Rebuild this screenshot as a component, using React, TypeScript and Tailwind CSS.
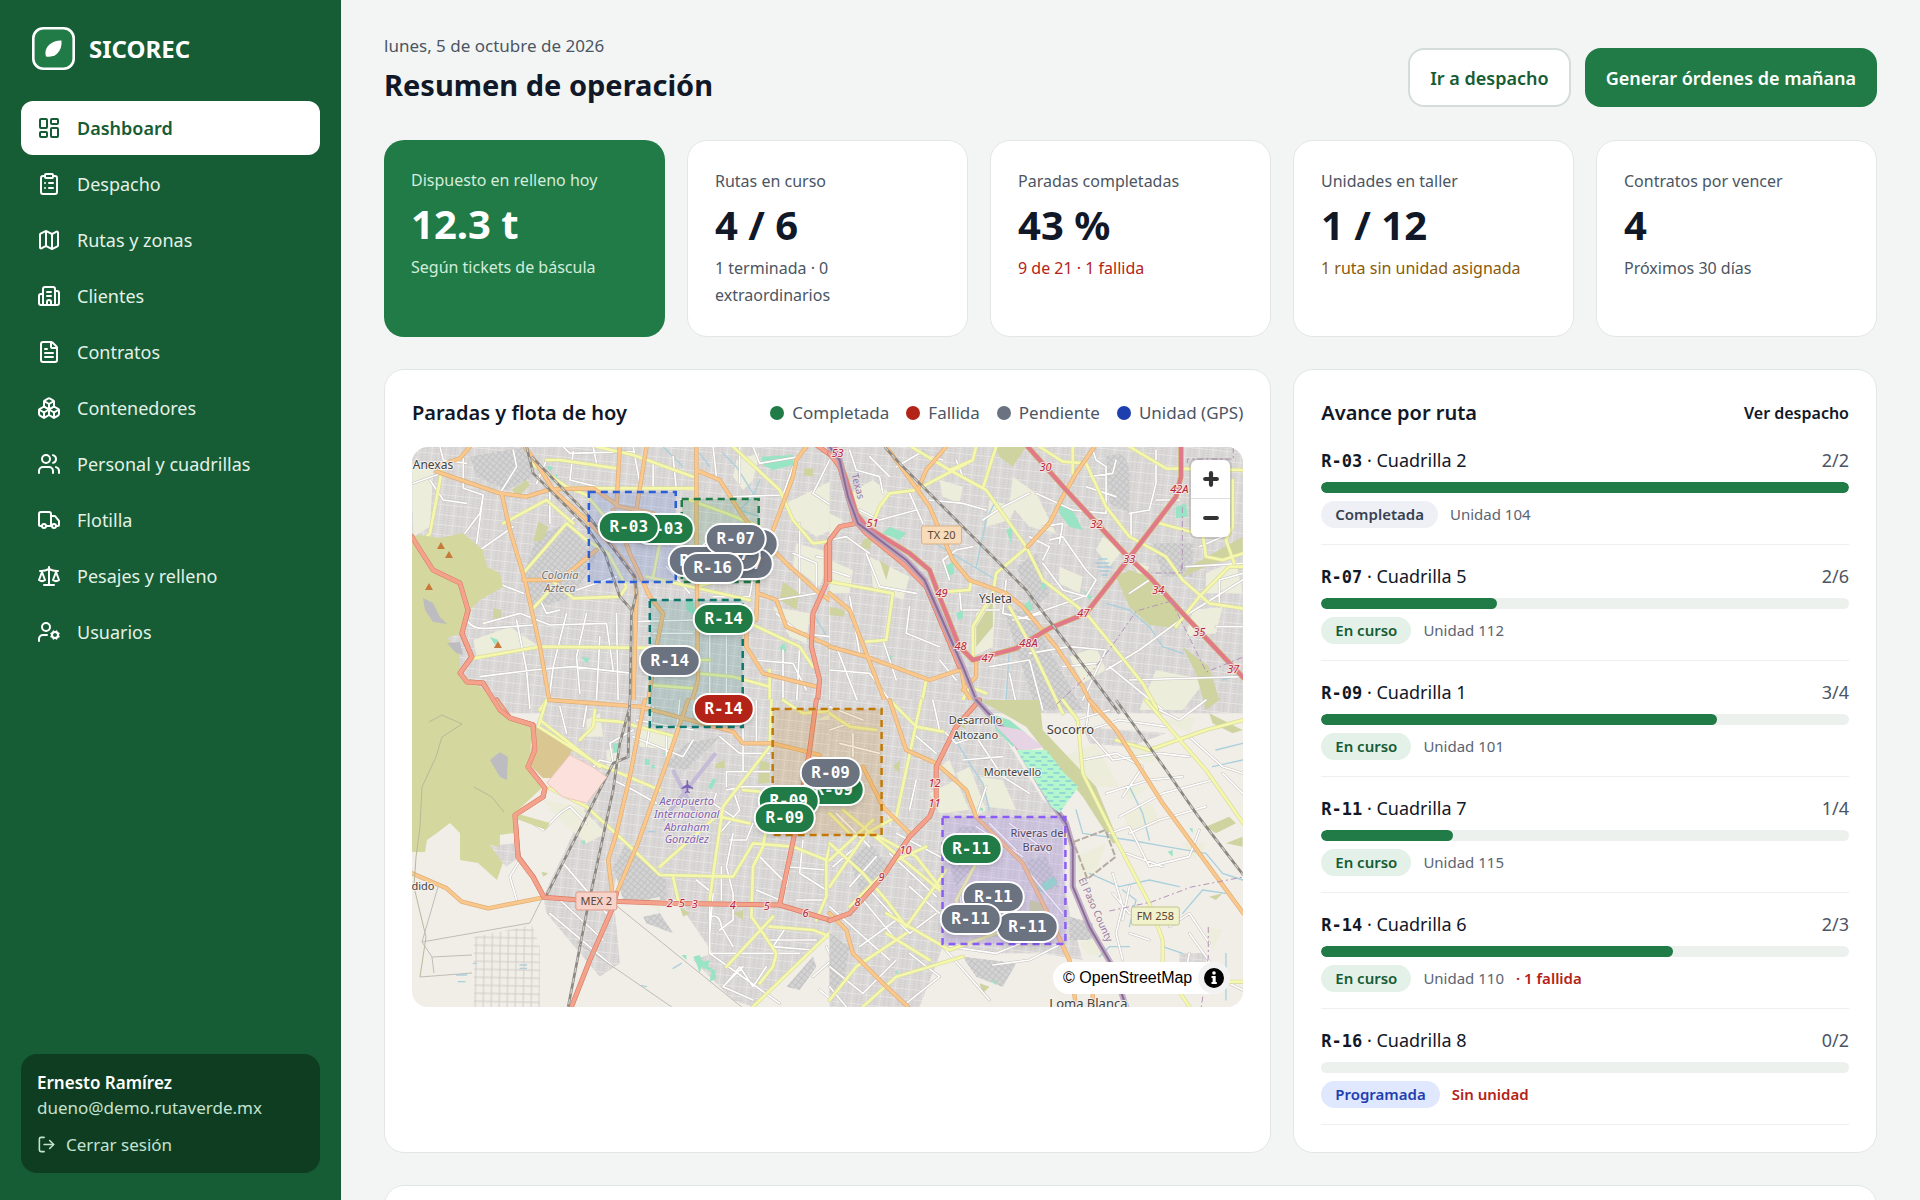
import React from 'react';
import {
  Boxes,
  ClipboardList,
  FileText,
  LayoutDashboard,
  LogOut,
  Map as MapIcon,
  Minus,
  Plus,
  Scale,
  Truck,
  UserCog,
  Users,
  type LucideIcon,
} from 'lucide-react';
import clsx from 'clsx';

interface NavItem {
  label: string;
  icon: LucideIcon | typeof ClientsIcon;
  active?: boolean;
}

interface Stat {
  label: string;
  value: string;
  note: string;
  tone?: 'danger' | 'warning';
  highlight?: boolean;
}

interface RouteProgress {
  code: string;
  crew: string;
  done: number;
  total: number;
  status: 'Completada' | 'En curso' | 'Programada';
  unit?: string;
  failed?: number;
}

interface Pin {
  code: string;
  x: number;
  y: number;
  status: 'done' | 'failed' | 'pending';
}

function ClientsIcon({ className }: { className?: string }) {
  return (
    <svg
      className={className}
      viewBox="0 0 24 24"
      fill="none"
      stroke="currentColor"
      strokeWidth="2"
      strokeLinecap="round"
      strokeLinejoin="round"
      aria-hidden="true"
    >
      <path d="M10 12h4M10 8h4M14 21v-3a2 2 0 0 0-4 0v3" />
      <path d="M6 10H4a2 2 0 0 0-2 2v7a2 2 0 0 0 2 2h16a2 2 0 0 0 2-2V9a2 2 0 0 0-2-2h-2" />
      <path d="M6 21V5a2 2 0 0 1 2-2h8a2 2 0 0 1 2 2v16" />
    </svg>
  );
}

const navItems: NavItem[] = [
  { label: 'Dashboard', icon: LayoutDashboard, active: true },
  { label: 'Despacho', icon: ClipboardList },
  { label: 'Rutas y zonas', icon: MapIcon },
  { label: 'Clientes', icon: ClientsIcon },
  { label: 'Contratos', icon: FileText },
  { label: 'Contenedores', icon: Boxes },
  { label: 'Personal y cuadrillas', icon: Users },
  { label: 'Flotilla', icon: Truck },
  { label: 'Pesajes y relleno', icon: Scale },
  { label: 'Usuarios', icon: UserCog },
];

const stats: Stat[] = [
  { label: 'Dispuesto en relleno hoy', value: '12.3 t', note: 'Según tickets de báscula', highlight: true },
  { label: 'Rutas en curso', value: '4 / 6', note: '1 terminada · 0 extraordinarios' },
  { label: 'Paradas completadas', value: '43 %', note: '9 de 21 · 1 fallida', tone: 'danger' },
  { label: 'Unidades en taller', value: '1 / 12', note: '1 ruta sin unidad asignada', tone: 'warning' },
  { label: 'Contratos por vencer', value: '4', note: 'Próximos 30 días' },
];

const routes: RouteProgress[] = [
  { code: 'R-03', crew: 'Cuadrilla 2', done: 2, total: 2, status: 'Completada', unit: 'Unidad 104' },
  { code: 'R-07', crew: 'Cuadrilla 5', done: 2, total: 6, status: 'En curso', unit: 'Unidad 112' },
  { code: 'R-09', crew: 'Cuadrilla 1', done: 3, total: 4, status: 'En curso', unit: 'Unidad 101' },
  { code: 'R-11', crew: 'Cuadrilla 7', done: 1, total: 4, status: 'En curso', unit: 'Unidad 115' },
  { code: 'R-14', crew: 'Cuadrilla 6', done: 2, total: 3, status: 'En curso', unit: 'Unidad 110', failed: 1 },
  { code: 'R-16', crew: 'Cuadrilla 8', done: 0, total: 2, status: 'Programada' },
];

const legend = [
  { label: 'Completada', dot: 'bg-[#207b46]' },
  { label: 'Fallida', dot: 'bg-[#b42318]' },
  { label: 'Pendiente', dot: 'bg-[#6b7280]' },
  { label: 'Unidad (GPS)', dot: 'bg-[#1e40af]' },
];

// Later pins are drawn over earlier ones
const pins: Pin[] = [
  { code: 'R-03', x: 252, y: 82, status: 'done' },
  { code: 'R-03', x: 217, y: 80, status: 'done' },
  { code: 'R-07', x: 336, y: 97, status: 'pending' },
  { code: 'R-07', x: 331, y: 117, status: 'pending' },
  { code: 'R-07', x: 318, y: 108, status: 'pending' },
  { code: 'R-07', x: 287, y: 114, status: 'pending' },
  { code: 'R-07', x: 324, y: 92, status: 'pending' },
  { code: 'R-16', x: 301, y: 121, status: 'pending' },
  { code: 'R-14', x: 312, y: 172, status: 'done' },
  { code: 'R-14', x: 258, y: 214, status: 'pending' },
  { code: 'R-14', x: 312, y: 262, status: 'failed' },
  { code: 'R-09', x: 422, y: 343, status: 'done' },
  { code: 'R-09', x: 419, y: 326, status: 'pending' },
  { code: 'R-09', x: 377, y: 354, status: 'done' },
  { code: 'R-09', x: 373, y: 371, status: 'done' },
  { code: 'R-11', x: 560, y: 402, status: 'done' },
  { code: 'R-11', x: 582, y: 450, status: 'pending' },
  { code: 'R-11', x: 616, y: 480, status: 'pending' },
  { code: 'R-11', x: 559, y: 472, status: 'pending' },
];

const zones = [
  { x: 177, y: 45, w: 87, h: 90, color: '#2b5fd9' },
  { x: 270, y: 52, w: 77, h: 83, color: '#207b46' },
  { x: 238, y: 153, w: 93, h: 127, color: '#0f766e' },
  { x: 361, y: 262, w: 109, h: 126, color: '#c27803' },
  { x: 531, y: 370, w: 123, h: 127, color: '#8b5cf6' },
];

const MAP_W = 832;
const MAP_H = 560;

interface Tile {
  x: number;
  y: number;
  built: string;
  built2?: string;
  park: string;
  farm: string;
  water: string;
  lane: string;
  minor: string;
  yellow: string;
  orange: string;
  red: string;
  pink?: string;
  border?: string;
  rail: string;
}

// Each tile is drawn at three times its size on the map
const tiles: Tile[] = [
  {
    x: -12,
    y: -67,
    built: 'M36 200H1320V1000H36Z',
    built2: 'M410 470L500 430L590 530L520 650L390 690L370 590ZM210 230L380 200L400 290L320 330L230 290Z',
    park: 'M335 330L380 300L390 315L355 350ZM400 485L415 425L445 440L430 480ZM1215 265H1240V290L1210 285ZM1150 605L1200 640L1190 690L1140 660ZM280 685L305 690V720L280 715Z',
    farm: 'M36 250L100 270L90 440L40 470ZM1010 240L1080 220L1060 300L1030 330L1000 290ZM1160 370L1320 290V440L1250 470L1190 430ZM1190 490L1300 520L1260 620L1180 560ZM1120 680L1230 700L1220 790L1170 770ZM220 780L330 740L420 800L230 830Z',
    water: 'M1085 230L1180 225V255L1120 270L1090 255ZM440 255L460 262L450 275ZM465 280L475 285L470 295Z M270 770L295 780L285 795ZM545 830L570 835L560 850ZM1140 800L1155 790L1160 815L1145 820ZM860 660L880 665L890 710L860 690Z',
    lane: 'M900 220L930 260M1080 300L1060 350L1020 390L1080 410M970 220L1010 260L1060 340M1240 700L1300 800L1290 900M790 200L850 260',
    minor: 'M40 310L125 280M190 235V325L250 345L240 400L195 460M120 200L130 240L200 250M90 300L130 360L200 370M250 345L230 490M300 340L350 260L340 210M520 215L510 300L590 320M580 200L590 250M490 200L510 220L700 215M440 240L410 310M700 200L720 310M760 250V330M820 230L830 330M940 200L950 290M1000 350L1150 345L1180 260M1020 200V310M1060 200L1080 250L1200 230M1290 240L1240 340L1300 380M500 430L540 400L600 440M240 510L340 440M250 730L360 700L450 735L620 730L640 870M500 700L460 860L450 940M560 700L530 830L540 940M350 720L380 870L390 985M190 690Q200 750 260 745L400 735M240 890L400 870L520 860L700 880M600 770L590 960M650 700L655 960M700 725L880 720M760 760H880M750 850H880M930 740V980M980 740V980M1180 520L1250 550V640L1130 660M1200 430V640M1250 530L1320 540M1130 700L1200 760L1290 770M1060 840L1180 850L1220 930M1150 810V980M1200 800L1190 985M1290 640V990M530 630L650 590M270 600L370 640M420 660L440 700L480 690M450 330V430M800 560L870 640M940 650H1050L1060 590',
    yellow:
      'M440 240L480 240L650 265M590 200L700 225L880 290M125 275L90 460L50 500M395 250L500 320L560 345L640 440M470 325H890M370 580L500 430L560 480L625 520L680 620L660 650L520 655L460 605M395 690L460 620M310 430L440 360L520 430M220 835L420 800L880 805M1000 200L1140 330L1180 420L1240 490L1320 480M740 590L1050 660M780 490L760 590M870 360L980 400L1080 440M750 915L880 925M890 880L1000 890L1110 920M1110 870V1000M1030 720L1200 800L1240 860M890 620L1075 570M750 840H930M420 990L440 960',
    orange:
      'M110 275L300 340L380 350L450 328L580 325L660 380L760 400M375 200L410 250L460 330L560 420L640 500L705 590L710 640L700 1000M305 340L330 450L375 600L420 800L448 960L720 985M660 200L650 380M740 200L705 420M640 390L690 520L750 650L790 700L770 800L740 1000M890 200V460L895 900L865 1000M890 270L960 300L1030 410L1080 470L1160 550L1260 640L1320 680M1220 200L1190 240L1180 290L1120 450M1075 560L1070 720M1075 640L1130 660L1160 740L1320 810M1040 700V800L1090 880L1250 920M370 600L480 600L590 510M210 200L180 235L110 260',
    red: 'M36 470L100 570L180 610L205 690L185 760L215 830L180 880L200 905L250 910L300 1000M1320 450L1280 500V610L1240 700L1235 800L1260 900L1250 1000M1250 195L1300 230L1325 260',
    rail: 'M380 200L400 280L470 350L560 440L615 520L660 650L700 695M395 230L560 400L705 590L710 640L695 700L690 1000',
  },
  {
    x: 418,
    y: -67,
    built: 'M0 200H1242V1000H0Z',
    built2: 'M830 230Q900 200 900 290V400L840 370ZM970 490H1090V590H1000ZM520 680L600 700L760 990L620 990ZM560 560L620 520L660 640L610 690Z',
    park: 'M860 590L900 570L960 590L1050 700L1040 745L960 735L900 680ZM1080 560L1240 470V520L1130 560L1060 590ZM1060 800L1140 860L1170 960L1130 990L1100 880ZM500 200H590L550 260L510 230ZM440 740L490 660V740L440 800ZM100 480L130 465L120 510L95 500ZM150 540L180 560L170 600ZM0 680L45 690V710L0 705Z',
    farm: 'M60 340L130 300L180 340L130 420L90 400ZM0 540L70 570L60 640L0 640ZM120 530L240 590L220 660L130 620ZM550 290L620 340L680 460L600 440L540 370ZM480 360L560 380L540 420L470 440ZM1130 580L1220 540L1240 640L1130 640ZM330 300L400 320L390 370L340 350ZM690 560L760 590L750 640L690 610ZM1090 690L1180 680L1160 760L1070 770ZM720 830L800 800L830 870L760 910ZM0 400L40 420L0 500ZM900 540L960 560L940 600ZM980 870L1130 900L1060 990H930ZM440 700L500 650L490 800L430 830ZM820 470L880 510L840 560L800 510Z',
    water: 'M180 440L230 460L210 480L160 460ZM685 360L730 390L760 450L720 440L690 400ZM345 560L370 545L375 580L350 590ZM380 700L400 690V715L385 720ZM580 680L600 660L610 690L585 700ZM760 630L790 650L780 660ZM1040 380L1070 370L1075 410L1040 415ZM635 610L650 605V625L640 630ZM530 450L550 440L545 490ZM170 820L190 830L180 850Z',
    lane: 'M500 360L470 420L440 560M830 670L900 690L960 740L1000 800L1060 820M540 800L530 960M1180 900L1240 880M300 480L500 600M280 210L300 240',
    minor: 'M60 210L80 270L150 290L160 340M120 230L180 290M200 260L270 220L340 240M90 390L150 420L260 390M0 480L50 470L120 520M110 520L150 620L260 640M0 570L60 590M340 540L380 510L430 500M340 540L360 600M300 360L400 370L470 390M380 240L400 290M240 340L280 430M460 420L520 380L600 340M620 340L730 390L830 400L830 260L800 240L790 210M780 290L850 280L860 240M770 320L860 350M660 480L700 470L770 570L800 600L770 650L700 630L640 550M600 470L660 500L640 540M900 400L960 390L980 310L980 210M905 400V470M980 360H1050M590 710L760 650M550 720L640 700M530 600L520 700L610 720M400 690H510M390 630L395 690M600 820L720 800L830 810L760 960M830 870L930 810L1080 700L1240 600M840 860L1000 990M900 900L1240 890M1160 740H1240M1170 680V600L1240 580M1070 560L1240 550M0 870L120 880L180 960M20 800L90 980M240 680L230 760L330 800M160 780L200 900M60 650L90 820M330 840L380 900M480 860L600 840L640 990M540 880L560 970M700 860L800 850M960 600L900 640M1110 500L1180 470M640 440L700 430L690 490',
    yellow:
      'M245 200L360 270L470 330L590 500L640 600L770 700L860 810L940 910L990 1000M500 200L460 325M440 200L430 240L260 330L180 340L150 380L130 430M360 270L430 240M630 200L700 245L770 250L830 380L900 470L1010 530L1060 600L1140 670L1240 685M900 200L1010 265L1240 270M1120 460L1130 530L1180 540L1242 520M1242 560H1200L1110 650L1040 740M595 500L500 580L490 640L430 740V830M730 200V280M0 605L190 640L170 780L110 785M350 635L420 630L425 600M540 680L600 790L700 1000M290 900L270 1000M990 430L1085 455M1210 300V440L1190 480L1215 550M470 940L420 920L380 1000',
    orange:
      'M170 200L250 310L300 380L330 450L370 540L420 600L530 640L580 680L680 800L760 920L800 1000M350 200L290 270L265 330M795 200L740 280L700 350L660 430L595 500M0 800L110 830L300 900L390 870M0 640L60 690L110 820L180 1000M395 860L405 930L450 1000M440 840L440 890L400 930',
    red: 'M0 600V480L30 440L80 430M0 220L30 260L75 420L110 460L220 550L290 620L340 740L390 860',
    pink: 'M15 200L50 300L80 400L110 440L240 520L300 570L330 650L390 800L430 840L560 805L660 745L770 700L895 540L1040 350L1055 290V200M595 200L710 330L895 530L960 590L1060 700L1242 893',
    border: 'M0 200L30 240L55 350L85 430L230 540L285 600L325 690L400 860L440 960L465 1000',
    rail: 'M165 200L210 250L590 630L780 880L870 1000',
  },
  {
    x: -12,
    y: 253,
    built: 'M400 90L450 0H1320V670L1060 920L1000 900L880 780L940 760L830 600L780 600L660 470L640 580L660 790L600 830L440 640L430 590L600 230ZM260 440L340 430L360 470L320 500Z',
    built2: 'M640 500L680 430L800 540V600H670ZM860 130L960 110L860 210L790 200ZM1160 860L1240 770L1250 800L1200 870ZM730 650L780 640L820 700L740 670Z',
    park: 'M950 190L975 180V205H945ZM1080 180L1110 190V250H1075ZM1000 640L1030 630V660ZM425 515L445 520L430 530ZM840 620L870 640L850 650Z',
    farm: 'M620 150L660 140V200L620 210ZM740 600L780 590V640ZM720 80L830 110L820 150L720 140ZM560 60L600 40L610 110L560 110ZM430 300L540 320L620 400L560 430L470 350ZM1250 60L1320 30V60Z',
    water: 'M640 130H660V155L640 160ZM735 175L750 180V195H735ZM755 195H765V205H755ZM790 160L800 155V170ZM845 765H860V780ZM880 770L900 765L910 785L930 780L925 800L945 810L950 835L930 845L935 815L905 800L900 820L890 790ZM925 260L940 235L950 240L935 270ZM545 425L555 420V435Z',
    lane: 'M170 825H200M175 845H195M360 795H380M360 805H380M220 790H230M745 395H765M820 805L845 790M725 857L740 860',
    minor: 'M245 65L270 75L300 90L350 95L400 75M345 350L400 370L430 390L480 340L510 320L560 370M335 345L350 400L360 480L330 530L350 600M560 270L555 230L600 180L640 190L630 130L700 90M560 20L550 80M480 20L500 100M700 110L850 170L880 120M760 20L740 140M800 100V170M640 240L700 270L770 310M710 60L880 90M980 270L1030 260L1110 260L1080 330M1000 270L1020 330L960 400M950 280L940 310L1000 350M1060 370L1040 420L990 420M1000 400L980 500L1000 580L1000 660L960 690M965 500V600M930 610V760H1200M930 650Q960 640 965 680L1000 740M1160 680L1120 740L1240 750M1110 720H1250M980 850L1020 800L1060 860L1100 800M930 760L1140 910M1030 800L970 860L1060 900M1070 570L1140 600M1080 470L1160 550M1180 440L1160 560M1210 420L1200 520L1280 570M1160 500L1280 510M1190 600L1280 600M1240 830L1320 760M1260 870L1320 920M1280 740L1320 820M980 215H1110M980 215V260M1030 0V210M1070 0V130M960 110L1020 160L1110 160M840 0L830 100M610 720L480 600M450 640L640 800M490 490L620 640M400 90L470 150M890 540L940 580L930 700',
    yellow:
      'M440 0L415 80L590 190L780 270M420 60L600 200M450 265L560 320L680 430L780 525L1000 530L1060 430L1180 440L1280 480L1320 490M780 500L960 340M1115 0L1110 140L970 320L945 490L930 600M820 530L835 600M1090 440L1060 500L1055 650L1090 700L1130 760L1120 800L1080 850M980 800L1120 650M1060 920L1320 670M1280 480V590L1250 660M1110 680L1240 690L1320 720M585 30L580 80L540 120M590 60L660 65L830 110M960 350L1050 370M1030 270L1080 275M1100 380L1090 440M1150 0L1210 40L1320 30M1300 400L1280 480',
    orange:
      'M36 520L140 565L185 605L265 625L432 592M735 0L690 230L650 400L625 480L640 600M865 0L800 190L710 440L650 580M448 0L720 20L1000 95L1030 130H1120L1260 165',
    red: 'M290 0L330 55L400 75L405 150L385 200L435 265L430 290L345 345L355 470L400 530L432 592L540 600L800 610L1140 615L1290 660H1320M515 920L570 780L640 620L650 580M1140 615L1185 400L1230 150L1250 0',
    rail: 'M690 0L685 170L640 190L440 585M690 20L660 130L640 270L560 640L505 920',
  },
  {
    x: 418,
    y: 253,
    built: 'M0 0H440L530 120L640 300L700 340V520L720 640L760 780L640 760L500 760L340 740L270 920H0ZM760 80L1010 100L900 140L780 130ZM1050 760H1130V830L1050 840Z',
    built2: 'M590 480L650 470L690 560L620 580ZM390 380H440L480 440L380 560L350 460ZM60 480L120 430L180 500L100 600ZM0 700L60 740L40 860L0 880ZM400 770L560 790L520 860L440 830ZM720 650L790 670V720H720Z',
    park: 'M450 0H630L640 90L800 260L870 430L850 430L760 290L660 170L590 80ZM1140 40L1240 90L1210 100L1150 70ZM1130 380L1200 350L1220 370L1160 400ZM450 850L480 860L460 880ZM600 600L640 610V640H600ZM1190 430L1240 410V440ZM190 200L210 180V220ZM370 60L400 50L410 90ZM1140 590L1180 580L1160 600Z',
    farm: 'M900 130L1000 140L970 190L900 170ZM880 340L970 310L990 370L900 400ZM880 260H960L900 300ZM380 220L420 200L470 330L440 350ZM450 230L520 240L560 330L480 320ZM1000 60L1100 50L1080 100ZM1130 680L1180 690L1150 750ZM300 280L380 240L420 330L330 340ZM740 470L830 430L800 520L750 530ZM330 200L360 180L380 230ZM750 730L800 710L820 770L770 760ZM700 170L800 130L870 260L790 260ZM1060 430H1130L1100 480ZM170 330L200 340L180 380Z',
    water: 'M480 40L540 60L590 100L550 140L500 90ZM625 560L670 530L685 550L640 580ZM1015 455L1030 450V470ZM195 815L205 810V825ZM480 840L500 845V855ZM1080 385H1090V400ZM440 320L460 325V335Z',
    lane: 'M360 90L420 190L460 250L480 330M740 330L760 400L900 420L1010 440L1130 460L1180 520L1240 540M880 570L920 600L900 680M1060 640L1120 570L1190 580M780 520L870 560L960 540L1050 560M810 770L840 740L900 740M1190 760V900M1150 200L1240 180M900 260L940 340L960 420M1000 740L1060 760M1160 150L1240 130',
    minor: 'M0 90L60 70M30 130L150 160M70 100V170M0 20L100 60M310 0L330 90M250 100L320 160M340 90L380 130L440 110M400 180L520 170M260 240L240 330M440 110L520 230L600 280M470 260L440 350M20 340L120 440M10 500L80 440M60 560L140 470M180 460L320 590M200 400L350 480M120 570L240 700L320 640M100 600L200 720M240 560L330 640M0 620L90 700L180 780M90 740L200 660M0 800L100 880L200 780M240 760L330 830L230 910M340 740L480 900M360 740L500 760L600 720M490 795L600 780L700 730M0 860L50 920M780 0L770 90L850 180L990 160L1080 170M780 90L870 60L1010 80M760 180L860 160L940 200L880 290M830 280L960 240L1060 230M870 350L1000 280L1150 240M900 400L990 360L1130 320M840 400L900 380L960 500L1080 470L1110 390M890 460L1000 500M740 60L840 30M990 30L1050 60L1130 0M1080 110L1180 200L1240 220M1180 220L1240 280M850 520L880 620L860 700L880 780M900 560L880 660M850 580L900 640L960 640M900 700L960 720M1020 680L1080 640L1140 730M1080 700L1180 840L1240 870M1010 840L1140 820M1080 760L1060 860M390 580L400 640L380 700M440 380L580 470M480 370L560 450M540 370L660 460M600 520L700 640',
    yellow:
      'M275 0L200 350L110 400L0 560M110 390L260 470L330 560M40 330L330 570M0 430L100 520L170 600L230 680L350 510M180 0L260 80L340 95M0 340L60 400M0 480L130 360M60 620L200 480L290 440M170 700L300 780M100 920L200 830L400 770M170 640L360 750L500 700M700 0L745 60L760 220L850 400L960 610L1000 720V800L1080 920M860 120L960 150L1130 90L1242 60M950 0L1060 130L1130 210L1242 370M440 490L380 600L400 690M0 900L80 800L230 700M1242 845H1190M0 40L60 80L140 90',
    orange:
      'M180 0L230 150L320 190L410 270L440 350L580 490L650 630L720 780M780 0L860 90L1000 310L1242 640M0 640L50 690L70 760L160 850L235 920M100 200L160 320L240 400M720 780L740 920M790 880V920',
    red: 'M0 662L60 640L160 530L240 410L300 350L320 300V200L380 80L450 0',
    border: 'M440 0L560 130L660 300L710 370L730 440V560L780 680L850 800L890 920',
    rail: 'M860 0L1010 210L1100 340L1242 525',
  },
];

const placeNames = [
  { text: 'Anexas', x: 21, y: 22, size: 12 },
  { text: 'Ysleta', x: 584, y: 156, size: 12 },
  { text: 'Desarrollo', x: 564, y: 277, size: 11 },
  { text: 'Altozano', x: 564, y: 292, size: 11 },
  { text: 'Socorro', x: 659, y: 287, size: 13 },
  { text: 'Montevello', x: 601, y: 329, size: 11 },
  { text: 'Riveras del', x: 627, y: 390, size: 11 },
  { text: 'Bravo', x: 626, y: 404, size: 11 },
  { text: 'dido', x: 11, y: 443, size: 11 },
  { text: 'Loma Blanca', x: 677, y: 561, size: 13 },
];

const exits = [
  ['53', 426, 10], ['51', 461, 80], ['49', 530, 150], ['48', 549, 203], ['47', 576, 215],
  ['48A', 617, 200], ['47', 672, 170], ['33', 718, 116], ['34', 747, 147], ['35', 788, 189],
  ['37', 822, 226], ['32', 685, 81], ['30', 634, 24], ['42A', 768, 46], ['12', 523, 340],
  ['11', 523, 360], ['10', 494, 407], ['9', 470, 434], ['8', 446, 459], ['2', 258, 460],
  ['5', 270, 460], ['3', 283, 461], ['4', 321, 462], ['5', 355, 463], ['6', 394, 470],
] as const;

function Road({ d, casing, fill, width }: { d: string; casing: string; fill: string; width: number }) {
  return (
    <>
      <path d={d} stroke={casing} strokeWidth={width + 4} />
      <path d={d} stroke={fill} strokeWidth={width} />
    </>
  );
}

function MapTile({ tile }: { tile: Tile }) {
  return (
    <g
      transform={`translate(${tile.x} ${tile.y}) scale(0.33333)`}
      fill="none"
      strokeLinejoin="round"
      strokeLinecap="round"
    >
      <path d={tile.built} fill="#dfdddc" />
      <path d={tile.built} fill="url(#blocks)" />
      {tile.built2 && <path d={tile.built2} fill="#d3d3d3" />}
      {tile.built2 && <path d={tile.built2} fill="url(#blocksDiagonal)" />}
      <path d={tile.farm} fill="#eceddb" />
      <path d={tile.park} fill="#ced3a0" />
      <path d={tile.water} fill="#98e4c4" />
      <path d={tile.lane} stroke="#a9d0dc" strokeWidth="4" />
      <path d={tile.minor} stroke="#c4c0bb" strokeWidth="8" />
      <path d={tile.minor} stroke="#ffffff" strokeWidth="5" />
      <Road d={tile.yellow} casing="#d9dba0" fill="#f5f8ac" width={8} />
      <Road d={tile.orange} casing="#dfae74" fill="#fac78d" width={9} />
      <Road d={tile.red} casing="#d87c66" fill="#f4a28c" width={11} />
      {tile.pink && <Road d={tile.pink} casing="#d3b26c" fill="#e2798a" width={12} />}
      <path d={tile.rail} stroke="#8c8781" strokeWidth="8" strokeLinecap="butt" />
      <path d={tile.rail} stroke="#cfcbc6" strokeWidth="4" strokeDasharray="16 16" strokeLinecap="butt" />
      {tile.border && <path d={tile.border} stroke="#b7a0bd" strokeWidth="18" strokeOpacity="0.8" />}
      {tile.border && <path d={tile.border} stroke="#8a6c98" strokeWidth="6" />}
    </g>
  );
}

function RoadShield({ x, y, w, text, fill, stroke }: { x: number; y: number; w: number; text: string; fill: string; stroke: string }) {
  return (
    <g>
      <rect x={x} y={y} width={w} height="18" rx="2" fill={fill} stroke={stroke} />
      <text x={x + w / 2} y={y + 13} fontSize="11" fill="#5b4636" textAnchor="middle">
        {text}
      </text>
    </g>
  );
}

function BaseMap() {
  return (
    <svg
      className="absolute inset-0 h-full w-full font-['Noto_Sans',sans-serif]"
      viewBox={`0 0 ${MAP_W} ${MAP_H}`}
      preserveAspectRatio="none"
      role="img"
      aria-label="Mapa de paradas"
    >
      <defs>
        <pattern id="blocks" width="42" height="30" patternUnits="userSpaceOnUse" patternTransform="rotate(6)">
          <path d="M0 3H42M0 10H42M0 17H42M0 24H42M6 0V30M20 0V30" stroke="#cbc9c8" strokeWidth="2" fill="none" />
          <path d="M0 29H42M34 0V30" stroke="#ebeae8" strokeWidth="2" fill="none" />
        </pattern>
        <pattern id="blocksDiagonal" width="14" height="14" patternUnits="userSpaceOnUse" patternTransform="rotate(40)">
          <path d="M0 4H14M4 0V14" stroke="#c2c2c2" strokeWidth="3" fill="none" />
        </pattern>
        <pattern id="outskirts" width="8" height="8" patternUnits="userSpaceOnUse" patternTransform="rotate(1)">
          <path d="M0 1H8M1 0V8" stroke="#cfccc7" strokeWidth="1" fill="none" />
        </pattern>
        <pattern id="marsh" width="12" height="8" patternUnits="userSpaceOnUse">
          <path d="M0 2H6M6 6H12" stroke="#6fb9dc" strokeWidth="1" fill="none" />
        </pattern>
      </defs>

      <rect width={MAP_W} height={MAP_H} fill="#f1eee8" />
      {tiles.map((tile) => (
        <MapTile key={`${tile.x}-${tile.y}`} tile={tile} />
      ))}

      {/* sierra */}
      <path
        d="M0 90L8 88L28 91L51 86L71 103L75 120L88 126L91 140L68 153L58 163L51 186L35 191L48 206L48 226L68 240L85 253L98 271L121 281L117 316L131 340L103 366L138 376L134 383L103 371L102 386L88 388V400L78 398L91 416L85 433L66 416L48 413V386L38 376L25 386L15 393L13 405L0 405Z"
        fill="#d5d89e"
      />
      <path d="M124 280L160 303L148 331L131 331L116 316Z" fill="#dac691" />
      <path d="M135 336L158 308L181 320L195 330L175 356L151 350Z" fill="#fbe0db" stroke="#efc6bf" />
      <path d="M11 151L21 156L28 170L35 177L21 175L13 163ZM78 313L88 305L96 310L95 333L88 330ZM35 196L48 195L51 208L44 206Z" fill="#bdbcc0" />
      <g fill="none" strokeLinejoin="round">
        <path
          d="M0 90L21 123L48 136L56 163L50 186L60 210L48 226L55 235L71 236L88 263L98 271L121 278L123 303L116 320L133 341L131 350L103 368L106 410L121 430L132 450"
          stroke="#d87c66"
          strokeWidth="5"
        />
        <path
          d="M0 90L21 123L48 136L56 163L50 186L60 210L48 226L55 235L71 236L88 263L98 271L121 278L123 303L116 320L133 341L131 350L103 368L106 410L121 430L132 450"
          stroke="#f4a28c"
          strokeWidth="4"
        />
        <path d="M17 275L30 268L50 277L30 290L24 310L10 340L8 380L4 410L2 440L14 490L8 530M62 340L80 350L92 365" stroke="#b9b89a" />
      </g>
      <path d="M29 95l4 7h-8zM37 104l4 7h-8zM17 136l4 7h-8zM86 194l4 7h-8z" fill="#c87a3c" />

      {/* unbuilt grid to the south-west */}
      <path d="M62 490L120 478L128 500L128 560H62Z" fill="url(#outskirts)" />
      <path
        d="M26 440L10 495L118 476L130 452M10 495L20 510L60 508M8 530L60 526M20 510L22 526M165 495L260 560M200 455L330 560"
        stroke="#bfbcb8"
        fill="none"
      />

      {/* river, wetland and colonia edges */}
      <path d="M583 278L610 283L632 300L609 305L595 290Z" fill="#e6d3e4" />
      <path d="M605 303L635 303L652 325L667 340L648 366L640 360Z" fill="#b4f6cd" />
      <path d="M605 303L635 303L652 325L667 340L648 366L640 360Z" fill="url(#marsh)" />
      <path d="M662 395L694 383L704 410L676 432Z" fill="none" stroke="#b5aaa0" strokeWidth="2" strokeDasharray="7 2" />
      <g stroke="#8fc3dc" strokeWidth="1">
        <path d="M687 112H696M684 116H698M686 120H700M688 124H698M690 128H696" />
      </g>
      <path
        d="M822 0V12H776V18M770 118V126H740M771 60V126M760 154L725 164L700 200L680 225L640 262M760 154L795 225L832 210M698 464L740 455L780 440L832 430M797 480V510L790 560"
        stroke="#b393b8"
        strokeDasharray="6 3 2 3"
        fill="none"
      />

      {/* airport */}
      <path d="M251 373L304 306M261 323L284 367" stroke="#c3bcd6" strokeWidth="4" fill="none" />
      <path
        transform="translate(269 333) scale(0.55)"
        d="M12 0c1 0 1.5 1.500 1.500 3v5l9 6v2.500l-9-2.500v6l3 2.200V24L12 22.800 7.500 24v-1.800l3-2.200v-6l-9 2.500V14l9-6V3C10.500 1.500 11 0 12 0z"
        fill="#7d63b8"
      />
      <g fontSize="11" fontStyle="italic" fill="#8065b5" textAnchor="middle" stroke="#f1eee8" strokeWidth="2" paintOrder="stroke">
        <text x="275" y="358">Aeropuerto</text>
        <text x="275" y="371">Internacional</text>
        <text x="275" y="384">Abraham</text>
        <text x="275" y="396">González</text>
      </g>

      <g fontSize="11" fontStyle="italic" fill="#77736e" textAnchor="middle" stroke="#eceae7" strokeWidth="2" paintOrder="stroke">
        <text x="148" y="132">Colonia</text>
        <text x="148" y="145">Azteca</text>
      </g>

      <g fill="#46423f" textAnchor="middle" stroke="#f4f2ee" strokeWidth="2" paintOrder="stroke">
        {placeNames.map((place) => (
          <text key={place.text} x={place.x} y={place.y} fontSize={place.size}>
            {place.text}
          </text>
        ))}
      </g>

      <g fontSize="11" fontStyle="italic" fill="#b3263e" textAnchor="middle" stroke="#f6e3df" strokeWidth="2" paintOrder="stroke">
        {exits.map(([text, x, y]) => (
          <text key={`${text}-${x}`} x={x} y={y}>
            {text}
          </text>
        ))}
      </g>

      <g fontSize="10" fill="#977aa3" textAnchor="middle">
        <text transform="translate(443 40) rotate(75)">Texas</text>
        <text transform="translate(681 464) rotate(66)">El Paso County</text>
      </g>

      <RoadShield x={510} y={79} w={40} text="TX 20" fill="#f8dcb9" stroke="#dcb183" />
      <RoadShield x={164} y={445} w={41} text="MEX 2" fill="#f7d2c8" stroke="#dd9a88" />
      <RoadShield x={720} y={460} w={48} text="FM 258" fill="#f1f2cb" stroke="#c3c58c" />

      {zones.map((zone) => (
        <rect
          key={zone.color}
          x={zone.x}
          y={zone.y}
          width={zone.w}
          height={zone.h}
          fill={zone.color}
          fillOpacity="0.16"
          stroke={zone.color}
          strokeWidth="2.500"
          strokeDasharray="7 5"
        />
      ))}
    </svg>
  );
}

function MapPinBadge({ pin }: { pin: Pin }) {
  return (
    <span
      className={clsx(
        "absolute -translate-x-1/2 -translate-y-1/2 rounded-full border-2 border-white px-2.5 font-['DejaVu_Sans_Mono',monospace] text-base leading-7 font-bold text-white shadow-md",
        pin.status === 'done' && 'bg-[#207b46]',
        pin.status === 'failed' && 'bg-[#b42318]',
        pin.status === 'pending' && 'bg-[#6b7280]',
      )}
      style={{ left: `${(pin.x / MAP_W) * 100}%`, top: `${(pin.y / MAP_H) * 100}%` }}
    >
      {pin.code}
    </span>
  );
}

function FleetMap() {
  return (
    <div className="relative h-[560px] overflow-hidden rounded-2xl bg-[#f1eee8]">
      <BaseMap />
      {pins.map((pin) => (
        <MapPinBadge key={`${pin.code}-${pin.x}-${pin.y}`} pin={pin} />
      ))}
      <div className="absolute top-[13px] right-[13px] flex w-[39px] flex-col divide-y divide-[#dddddd] rounded-md bg-white shadow-[0_0_0_2px_rgba(0,0,0,0.1)]">
        <button type="button" aria-label="Acercar" className="flex h-[39px] items-center justify-center text-[#333333]">
          <Plus className="h-5 w-5" strokeWidth={5} />
        </button>
        <button type="button" aria-label="Alejar" className="flex h-[38px] items-center justify-center text-[#333333]">
          <Minus className="h-5 w-5" strokeWidth={5} />
        </button>
      </div>
      <div className="absolute right-[13px] bottom-[13px] flex h-8 items-center rounded-full bg-white pl-2.5 font-['Liberation_Sans',sans-serif] text-base text-black">
        <a href="#osm">© OpenStreetMap</a>
        <button type="button" aria-label="Información" className="ml-1.5 flex h-8 w-8 items-center justify-center rounded-full bg-[#f2f2f2]">
          <svg className="h-5 w-5" viewBox="0 0 20 20" aria-hidden="true">
            <circle cx="10" cy="10" r="10" fill="#000000" />
            <circle cx="10" cy="5" r="1.800" fill="#ffffff" />
            <path d="M7.500 8H11.700V14H12.800V16H7.500V14H8.600V10H7.500Z" fill="#ffffff" />
          </svg>
        </button>
      </div>
    </div>
  );
}

function Sidebar() {
  return (
    <aside className="flex w-[341px] shrink-0 flex-col bg-[#165c34] px-[21px] py-[27px]">
      <div className="flex h-[43px] items-center gap-3.5 px-[11px]">
        <svg className="h-[43px] w-[43px]" viewBox="0 0 43 43" aria-hidden="true">
          <rect x="1.300" y="1.300" width="40.400" height="40.400" rx="10" fill="#207b46" stroke="#ffffff" strokeWidth="2.600" />
          <path d="M29.500 13.500C30 19 28.500 23.500 25 26.800C21.500 30 17 30 14 29.500C12.500 25 14 20.500 17.500 17.500C21 14.500 25 13.300 29.500 13.500Z" fill="#ffffff" />
        </svg>
        <span className="text-2xl font-bold text-white">SICOREC</span>
      </div>

      <nav className="mt-[31px] flex flex-col gap-0.5">
        {navItems.map(({ label, icon: Icon, active }) => (
          <a
            key={label}
            href="#nav"
            className={clsx(
              'flex h-[54px] items-center gap-4 rounded-xl px-4 text-lg',
              active ? 'bg-white font-semibold text-[#165c34]' : 'text-[#e3f1e8]',
            )}
          >
            <Icon className={clsx('h-6 w-6 shrink-0', !active && 'text-white')} />
            {label}
          </a>
        ))}
      </nav>

      <div className="mt-auto rounded-2xl bg-[#0f3d22] px-4 py-4 text-[17px] leading-[25px] text-[#c4e3d0]">
        <p className="font-semibold text-white">Ernesto Ramírez</p>
        <p>dueno@demo.rutaverde.mx</p>
        <button type="button" className="mt-3 flex items-center gap-2.5">
          <LogOut className="h-[19px] w-[19px]" />
          Cerrar sesión
        </button>
      </div>
    </aside>
  );
}

function StatCard({ stat }: { stat: Stat }) {
  return (
    <div
      className={clsx(
        'rounded-[20px] p-[27px]',
        stat.highlight ? 'bg-[#207b46] text-[#d3ecdc]' : 'border border-[#e2e7e4] bg-white text-[#4b5563]',
      )}
    >
      <p className="text-base leading-[26px]">{stat.label}</p>
      <p className={clsx('mt-2 text-[40px] leading-[45px] font-bold', stat.highlight ? 'text-white' : 'text-[#111827]')}>
        {stat.value}
      </p>
      <p
        className={clsx(
          'mt-2 text-base leading-[27px]',
          stat.tone === 'danger' && 'text-[#b42318]',
          stat.tone === 'warning' && 'text-[#8a5a0b]',
        )}
      >
        {stat.note}
      </p>
    </div>
  );
}

function RouteRow({ route }: { route: RouteProgress }) {
  return (
    <li className="border-b border-[#edf0ee] pt-[17px] pb-4">
      <div className="flex items-center justify-between text-lg leading-[29px]">
        <span className="text-[#111827]">
          <strong className="font-['DejaVu_Sans_Mono',monospace] text-[17px] leading-none font-bold">{route.code}</strong>
          {' · '}
          {route.crew}
        </span>
        <span className="text-[#4b5563]">
          {route.done}/{route.total}
        </span>
      </div>
      <div className="mt-[7px] h-[11px] overflow-hidden rounded-full bg-[#edf1ee]">
        <div className="h-full rounded-full bg-[#207b46]" style={{ width: `${(route.done / route.total) * 100}%` }} />
      </div>
      <div className="mt-2 flex items-center gap-3 text-[15px] leading-[27px]">
        <span
          className={clsx(
            'rounded-full px-3.5 font-semibold',
            route.status === 'Completada' && 'bg-[#eef0f5] text-[#374151]',
            route.status === 'En curso' && 'bg-[#e3f1e8] text-[#165c34]',
            route.status === 'Programada' && 'bg-[#dfe8ff] text-[#1e40af]',
          )}
        >
          {route.status}
        </span>
        {route.unit ? (
          <span className="text-[#5b6472]">{route.unit}</span>
        ) : (
          <span className="font-semibold text-[#b42318]">Sin unidad</span>
        )}
        {route.failed && <span className="font-semibold text-[#b42318]">· {route.failed} fallida</span>}
      </div>
    </li>
  );
}

export default function App() {
  return (
    <div className="flex h-screen overflow-hidden bg-[#f3f5f4] font-['Noto_Sans',sans-serif] text-[#111827]">
      <Sidebar />
      <main className="min-w-0 flex-1 overflow-hidden px-[43px] pt-8">
        <header className="flex items-center justify-between">
          <div className="pb-1">
            <p className="text-[17px] leading-[27px] text-[#4b5563]">lunes, 5 de octubre de 2026</p>
            <h1 className="mt-1 text-[29px] leading-[44px] font-bold">Resumen de operación</h1>
          </div>
          <div className="mt-3 flex gap-3.5 text-lg font-semibold">
            <button type="button" className="h-[59px] rounded-2xl border-2 border-[#d5ddd8] bg-white px-5 text-[#165c34]">
              Ir a despacho
            </button>
            <button type="button" className="h-[59px] rounded-2xl bg-[#207b46] px-[21px] text-white">
              Generar órdenes de mañana
            </button>
          </div>
        </header>

        <section className="mt-[29px] grid grid-cols-5 gap-[22px]">
          {stats.map((stat) => (
            <StatCard key={stat.label} stat={stat} />
          ))}
        </section>

        <section className="mt-8 grid grid-cols-[1.52fr_1fr] gap-[22px]">
          <div className="rounded-[20px] border border-[#e2e7e4] bg-white p-[27px]">
            <div className="mb-[18px] flex items-center justify-between">
              <h2 className="text-xl leading-8 font-semibold">Paradas y flota de hoy</h2>
              <ul className="flex gap-[17px] text-[17px] leading-7 text-[#4b5563]">
                {legend.map((item) => (
                  <li key={item.label} className="flex items-center gap-2">
                    <span className={clsx('h-3.5 w-3.5 rounded-full', item.dot)} />
                    {item.label}
                  </li>
                ))}
              </ul>
            </div>
            <FleetMap />
          </div>

          <div className="rounded-[20px] border border-[#e2e7e4] bg-white p-[27px]">
            <div className="flex items-center justify-between">
              <h2 className="text-xl leading-8 font-semibold">Avance por ruta</h2>
              <a href="#despacho" className="text-base font-semibold">
                Ver despacho
              </a>
            </div>
            <ul>
              {routes.map((route) => (
                <RouteRow key={route.code} route={route} />
              ))}
            </ul>
          </div>
        </section>

        <section className="mt-8 h-40 rounded-[20px] border border-[#e2e7e4] bg-white" />
      </main>
    </div>
  );
}
